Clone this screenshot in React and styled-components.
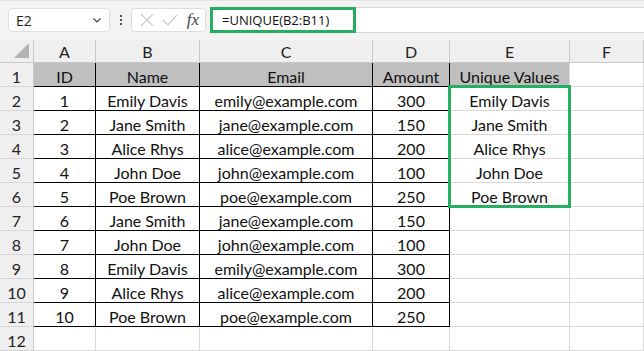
import React from 'react'
import styled, { createGlobalStyle } from 'styled-components'

const GlobalStyle = createGlobalStyle`
  html, body {
    margin: 0;
    padding: 0;
    background: #f3f3f3;
    font-family: Lato, "Open Sans", sans-serif;
    overflow: hidden;
  }
`

const Page = styled.div`
  width: 644px;
  height: 351px;
  background: #f3f3f3;
  border-top: 1px solid #e2e2e2;
  box-sizing: border-box;
  overflow: hidden;
`

const FormulaBar = styled.div`
  display: flex;
  align-items: stretch;
  height: 26px;
  margin-top: 6px;
  padding-left: 8px;
`

const NameBox = styled.div`
  display: flex;
  align-items: center;
  justify-content: space-between;
  width: 102px;
  box-sizing: border-box;
  margin: 1px 0;
  padding: 0 6px 0 7px;
  background: #fff;
  border: 1px solid #dedede;
  border-radius: 4px;
  font-family: "Open Sans", sans-serif;
  font-size: 14px;
  color: #222;
`

const Dots = styled.div`
  display: flex;
  flex-direction: column;
  justify-content: center;
  gap: 2px;
  width: 21px;
  align-items: center;
  & span {
    width: 2px;
    height: 2px;
    background: #555;
  }
`

const IconGroup = styled.div`
  display: flex;
  align-items: center;
  gap: 8px;
  width: 75px;
  box-sizing: border-box;
  margin: 1px 0;
  padding: 0 6px 0 8px;
  background: #fff;
  border: 1px solid #dedede;
  border-radius: 4px;
`

const Fx = styled.span`
  font-family: "Liberation Serif", serif;
  font-style: italic;
  font-size: 17px;
  color: #444;
  margin-left: 1px;
`

const FormulaInput = styled.div`
  flex: 1;
  margin-left: 4px;
  background: #fff;
  border-top: 1px solid #d6d6d6;
  border-bottom: 1px solid #d6d6d6;
  display: flex;
`

const Highlight = styled.div`
  width: 146px;
  margin: -1px 0;
  box-sizing: border-box;
  border: 3px solid #27ae60;
  padding-left: 9px;
  display: flex;
  align-items: center;
  font-family: "Open Sans", sans-serif;
  font-size: 13px;
  color: #111;
`

const Sheet = styled.div`
  position: relative;
  display: grid;
  grid-template-columns: 34px 62px 104px 173px 77px 120px 1fr;
  grid-template-rows: 23px repeat(12, 24px);
  margin-top: 7px;
  background: #fff;
`

const Corner = styled.div`
  background: #efefef;
  border-right: 1px solid #c8c8c8;
  border-bottom: 1px solid #c8c8c8;
  position: relative;
  &::after {
    content: '';
    position: absolute;
    right: 4px;
    bottom: 4px;
    width: 0;
    height: 0;
    border-left: 15px solid transparent;
    border-bottom: 15px solid #b3b3b3;
  }
`

const ColHead = styled.div`
  background: #efefef;
  border-right: 1px solid #c8c8c8;
  border-bottom: 1px solid #c8c8c8;
  display: flex;
  align-items: center;
  justify-content: center;
  padding-top: 1px;
  font-size: 16px;
  color: #222;
`

const RowHead = styled.div`
  background: #efefef;
  border-right: 1px solid #c8c8c8;
  border-bottom: 1px solid #d6d6d6;
  display: flex;
  align-items: center;
  justify-content: center;
  padding-top: 3px;
  font-size: 16px;
  color: #222;
`

const Cell = styled.div`
  display: flex;
  align-items: center;
  justify-content: center;
  padding-top: 3px;
  font-size: 16px;
  color: #111;
  white-space: nowrap;
  overflow: hidden;
  background: ${p => (p.$head ? '#bfbfbf' : '#fff')};
  border-right: 1px solid ${p => (p.$table ? '#000' : '#dadada')};
  border-bottom: 1px solid ${p => (p.$table ? '#000' : '#dadada')};
`

/* green outline drawn over the E2:E6 range */
const Selection = styled.div`
  position: absolute;
  grid-column: 6 / 7;
  grid-row: 3 / 8;
  top: -2px;
  left: -2px;
  right: -1px;
  bottom: -1px;
  border: 3px solid #27ae60;
  pointer-events: none;
`

const cols = ['A', 'B', 'C', 'D', 'E', 'F']

const data = [
  [1, 'Emily Davis', 'emily@example.com', 300],
  [2, 'Jane Smith', 'jane@example.com', 150],
  [3, 'Alice Rhys', 'alice@example.com', 200],
  [4, 'John Doe', 'john@example.com', 100],
  [5, 'Poe Brown', 'poe@example.com', 250],
  [6, 'Jane Smith', 'jane@example.com', 150],
  [7, 'John Doe', 'john@example.com', 100],
  [8, 'Emily Davis', 'emily@example.com', 300],
  [9, 'Alice Rhys', 'alice@example.com', 200],
  [10, 'Poe Brown', 'poe@example.com', 250],
]

const unique = ['Emily Davis', 'Jane Smith', 'Alice Rhys', 'John Doe', 'Poe Brown']

const Chevron = () => (
  <svg width="12" height="12" viewBox="0 0 12 12">
    <path d="M2.5 4.5 L6 8 L9.5 4.5" fill="none" stroke="#444" strokeWidth="1.2" />
  </svg>
)

const Cross = () => (
  <svg width="14" height="14" viewBox="0 0 14 14">
    <path d="M1 1 L13 13 M13 1 L1 13" stroke="#c4c4c4" strokeWidth="1.1" />
  </svg>
)

const Check = () => (
  <svg width="16" height="14" viewBox="0 0 16 14">
    <path d="M1 7 L6 12 L15 2" fill="none" stroke="#c4c4c4" strokeWidth="1.1" />
  </svg>
)

const App = () => (
  <Page>
    <GlobalStyle />
    <FormulaBar>
      <NameBox>
        E2
        <Chevron />
      </NameBox>
      <Dots>
        <span />
        <span />
        <span />
      </Dots>
      <IconGroup>
        <Cross />
        <Check />
        <Fx>fx</Fx>
      </IconGroup>
      <FormulaInput>
        <Highlight>=UNIQUE(B2:B11)</Highlight>
      </FormulaInput>
    </FormulaBar>
    <Sheet>
      <Corner />
      {cols.map(c => (
        <ColHead key={c}>{c}</ColHead>
      ))}

      <RowHead>1</RowHead>
      <Cell $table $head>ID</Cell>
      <Cell $table $head>Name</Cell>
      <Cell $table $head>Email</Cell>
      <Cell $table $head>Amount</Cell>
      <Cell $head>Unique Values</Cell>
      <Cell />

      {data.map((row, i) => (
        <React.Fragment key={i}>
          <RowHead>{i + 2}</RowHead>
          {row.map((v, j) => (
            <Cell key={j} $table>
              {v}
            </Cell>
          ))}
          <Cell>{unique[i] || ''}</Cell>
          <Cell />
        </React.Fragment>
      ))}

      <RowHead>12</RowHead>
      {cols.map(c => (
        <Cell key={c} />
      ))}

      <Selection />
    </Sheet>
  </Page>
)

export default App
